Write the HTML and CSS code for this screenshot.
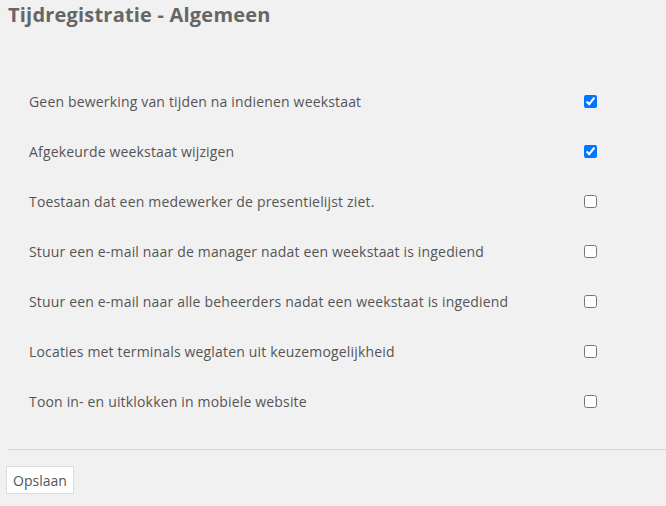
FILE: index.html
```html
<!DOCTYPE html>
<html lang="nl">

<head>
    <meta charset="UTF-8" />
    <title>Tijdregistratie - Algemeen</title>
    <link rel="stylesheet" href="styles.css">
</head>

<body>
    <h1>Tijdregistratie - Algemeen</h1>
    <form class="settings">
        <label class="row">
            <span>Geen bewerking van tijden na indienen weekstaat</span>
            <input type="checkbox" checked />
        </label>
        <label class="row">
            <span>Afgekeurde weekstaat wijzigen</span>
            <input type="checkbox" checked />
        </label>
        <label class="row">
            <span>Toestaan dat een medewerker de presentielijst ziet.</span>
            <input type="checkbox" />
        </label>
        <label class="row">
            <span>Stuur een e-mail naar de manager nadat een weekstaat is ingediend</span>
            <input type="checkbox" />
        </label>
        <label class="row">
            <span>Stuur een e-mail naar alle beheerders nadat een weekstaat is ingediend</span>
            <input type="checkbox" />
        </label>
        <label class="row">
            <span>Locaties met terminals weglaten uit keuzemogelijkheid</span>
            <input type="checkbox" />
        </label>
        <label class="row">
            <span>Toon in- en uitklokken in mobiele website</span>
            <input type="checkbox" />
        </label>
    </form>
    <hr class="divider" />
    <div class="actions">
        <button type="button">Opslaan</button>
    </div>
</body>

</html>
```

FILE: styles.css
```css
body {
    font-family: 'Open Sans', sans-serif;
    background: #f1f1f1;
    color: #555;
    margin: 0;
    padding: 0;
}

h1 {
    margin: 0;
    padding: 2px 8px 4px;
    font-size: 20px;
    line-height: 26px;
    font-weight: bold;
    letter-spacing: 0.2px;
    color: #666;
}

.settings {
    margin-top: 44px;
    padding-left: 29px;
    width: 571px;
}

.row {
    display: flex;
    align-items: center;
    justify-content: space-between;
    height: 50px;
    font-size: 14px;
    letter-spacing: 0.17px;
}

.row input {
    margin: 0 3px 0 0;
    width: 13px;
    height: 13px;
}

.divider {
    margin: 23px 0 0 8px;
    border: none;
    border-top: 1px solid #d4d4d4;
}

.actions {
    padding: 16px 6px;
}

button {
    font-family: inherit;
    font-size: 14px;
    color: #555;
    background: #fff;
    border: 1px solid #ddd;
    padding: 0 6px;
    height: 28px;
}
```
